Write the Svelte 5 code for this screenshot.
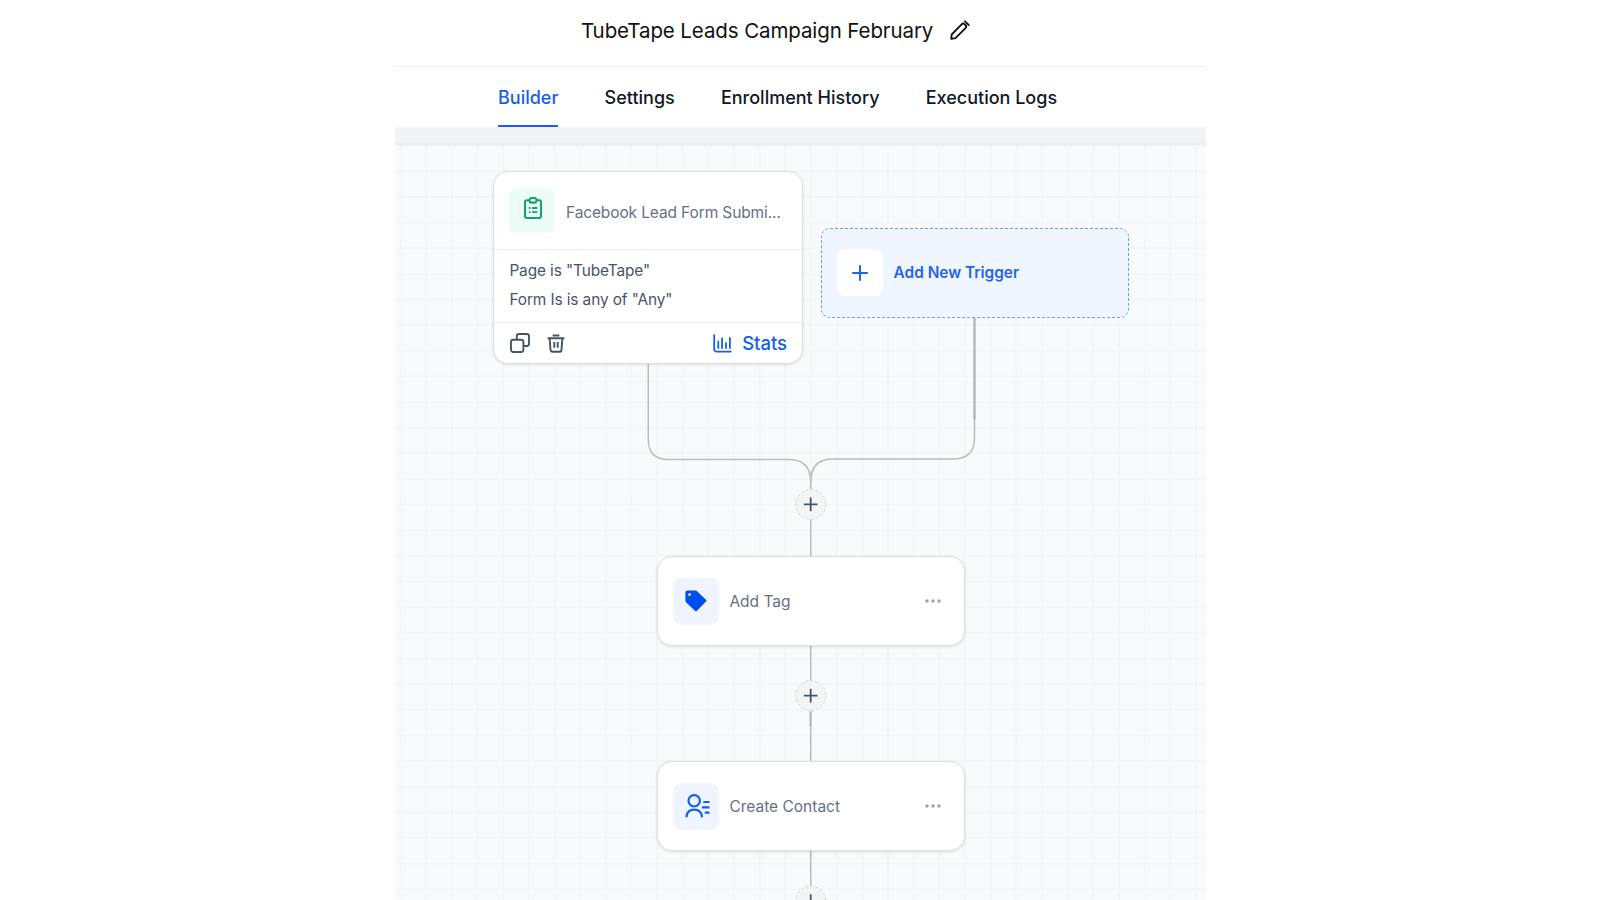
<script>
  const tabs = ['Builder', 'Settings', 'Enrollment History', 'Execution Logs'];
  const steps = [
    { label: 'Add Tag', top: 411, kind: 'tag' },
    { label: 'Create Contact', top: 616, kind: 'contact' }
  ];
  const adders = [359.4, 550.6, 756];
</script>

<main class="panel">
  <header>
    <h1>TubeTape Leads Campaign February</h1>
    <svg class="pencil" width="20" height="20" viewBox="0 0 20 20" fill="none" stroke="#111" stroke-width="1.800" stroke-linejoin="round" stroke-linecap="round">
      <path d="M1.200 18.800l.5-4.300L11.600 4.300a2.200 2.200 0 0 1 3.100 0l.8.8a2.200 2.200 0 0 1 0 3.100L5.500 18.100z" />
      <path d="M15 1.300l3.700 3.700" />
    </svg>
  </header>
  <nav>
    {#each tabs as tab, i}
      <span class="tab" class:active={i === 0}>{tab}</span>
    {/each}
  </nav>
  <div class="band"></div>
  <section class="canvas">
    <svg class="wires" width="811" height="755" fill="none">
      <g stroke="#b9bbbf" stroke-width="1.5">
        <path d="M253.300 218V294.500q0 20 20 20H393.500Q415.700 314.500 415.700 337V412" />
        <path d="M579.500 172V293.500q0 20.500-22 20.500H437.500Q415.700 314 415.700 337" />
        <path d="M415.700 500V616M415.700 706V755" />
      </g>
      <path d="M579.500 173V274.500" stroke="#b5b7bb" stroke-width="2.300" />
      <path d="M415.500 567V581" stroke="#b5b7bb" stroke-width="2" />
      {#each adders as y}
        <g transform="translate(415.700 {y})">
          <circle r="15" fill="#f3f4f6" stroke="#d3d6db" stroke-dasharray="3 2" />
          <path d="M0-6.800V6.800M-6.800 0H6.800" stroke="#475467" stroke-width="1.800" />
        </g>
      {/each}
    </svg>

    <article class="card trigger">
      <div class="head">
        <div class="tile green">
          <svg width="18" height="22" viewBox="0 0 18 22" fill="none" stroke="#12a26d" stroke-width="2.100" stroke-linejoin="round">
            <path d="M5.500 3.200H3A2 2 0 0 0 1 5.200V19a2 2 0 0 0 2 2H15a2 2 0 0 0 2-2V5.200a2 2 0 0 0-2-2H12.500" />
            <rect x="5.500" y="1" width="7" height="4.600" rx="2.200" />
            <path stroke-width="1.800" d="M4.800 11H6.500M8 11H13.300M4.800 15.200H6.500M8 15.200H13.300" />
          </svg>
        </div>
        <span class="label">Facebook Lead Form Submi...</span>
      </div>
      <div class="rules">
        <span>Page is "TubeTape"</span>
        <span>Form Is is any of "Any"</span>
      </div>
      <footer>
        <svg width="20" height="20" viewBox="0 0 20 20" fill="none" stroke="#475467" stroke-width="1.900" stroke-linejoin="round">
          <rect x="1" y="6.800" width="12.400" height="12.200" rx="2.200" />
          <path d="M6.800 6.800V3.200A2.200 2.200 0 0 1 9 1H16.800A2.200 2.200 0 0 1 19 3.200V10.800A2.200 2.200 0 0 1 16.800 13H13.400" />
        </svg>
        <svg class="bin" width="18" height="19" viewBox="0 0 18 19" fill="none" stroke="#475467" stroke-width="1.900">
          <path d="M.6 4.200H17.400M5.600 1.500H12.400M2.600 4.200l.9 11.600a2.200 2.200 0 0 0 2.200 2h6.600a2.200 2.200 0 0 0 2.200-2l.9-11.600M7.300 8V13.800M10.700 8V13.800" />
        </svg>
        <svg class="chart" width="19" height="19" viewBox="0 0 19 19" fill="none" stroke="#155eef" stroke-width="1.800" stroke-linecap="round">
          <path d="M1.200 1.200V15.400a2.200 2.200 0 0 0 2.200 2.200H17.700M5.300 7.500V14M9.100 4.500V14M13 9V14M16.900 4V14" />
        </svg>
        <strong>Stats</strong>
      </footer>
    </article>

    <article class="new">
      <div class="tile white">
        <svg width="18" height="18" viewBox="0 0 18 18" stroke="#2563eb" stroke-width="2"><path d="M9 1.200V16.800M1.200 9H16.800" /></svg>
      </div>
      <strong>Add New Trigger</strong>
    </article>

    {#each steps as step}
      <article class="card step" style:top="{step.top}px">
        <div class="tile blue">
          {#if step.kind === 'tag'}
            <svg width="22" height="22" viewBox="0 0 22 22">
              <path fill="#004eeb" fill-rule="evenodd" d="M2.300.5H10.300a2 2 0 0 1 1.500.6L21 9.700a1.300 1.300 0 0 1 0 1.900L12 20.700a1.500 1.500 0 0 1-2.100 0L1 12.200A2 2 0 0 1 .4 10.700V2.500A2 2 0 0 1 2.300.5zM4.600 3.200a1.400 1.400 0 1 0 0 2.800 1.400 1.400 0 0 0 0-2.800z" />
            </svg>
          {:else}
            <svg class="person" width="25" height="24" viewBox="0 0 25 24" fill="none" stroke="#155eef" stroke-width="2.200">
              <circle cx="9.200" cy="6.800" r="5.700" />
              <path stroke-linecap="round" d="M1.500 22.500C2 18.200 5 15.600 9.200 15.600S16.400 18.200 17 22.500" />
              <path d="M18.300 8H24.500M16.800 13.300H24.500M19.800 18.700H24.500" />
            </svg>
          {/if}
        </div>
        <span class="label">{step.label}</span>
        <svg class="dots" width="16" height="4" viewBox="0 0 16 4" fill="#98a2b3">
          <circle cx="2" cy="2" r="1.700" /><circle cx="8" cy="2" r="1.700" /><circle cx="14" cy="2" r="1.700" />
        </svg>
      </article>
    {/each}
  </section>
</main>

<style>
  :global(body) { margin: 0; background: #fff; overflow: hidden; }
  .panel { width: 811px; height: 900px; margin-left: 395px; display: flex; flex-direction: column; font-family: Inter, sans-serif; overflow: hidden; }
  header { height: 67px; box-sizing: border-box; flex: none; border-bottom: 1px solid #eceef1; display: flex; align-items: center; padding: 0 0 5px 186px; gap: 16.500px; }
  h1 { margin: 0; font-size: 20.500px; letter-spacing: -0.100px; font-weight: 400; color: #111; line-height: 26px; white-space: nowrap; }
  .pencil { margin-bottom: 1px; }
  nav { height: 60px; flex: none; display: flex; gap: 46.200px; padding-left: 103px; }
  .tab { box-sizing: border-box; height: 60px; line-height: 62px; font-size: 18px; font-weight: 500; color: #101828; white-space: nowrap; }
  .active { color: #155eef; border-bottom: 2px solid #155eef; }
  .band { height: 18px; flex: none; box-sizing: border-box; background: #f2f3f5; border-bottom: 2px solid #e9ebed; }
  .canvas {
    position: relative; flex: 1; background-color: #f9fafc;
    background-image: linear-gradient(90deg, #f3f5f7 1.500px, transparent 1.500px), linear-gradient(#f3f5f7 1.500px, transparent 1.500px);
    background-size: 25.670px 25.650px; background-position: 4.600px -0.300px;
  }
  .wires { position: absolute; left: 0; top: 0; }
  .card { position: absolute; box-sizing: border-box; background: #fff; border: 1px solid #dcdfe5; border-radius: 15px; box-shadow: 0 1px 3px rgba(16, 24, 40, 0.12); }
  .trigger { left: 98.400px; top: 26px; width: 310px; height: 193px; display: flex; flex-direction: column; }
  .head { height: 78px; box-sizing: border-box; display: flex; padding: 16px 0 0 15px; border-bottom: 1px solid #eaecf0; }
  .tile { width: 46px; height: 47px; border-radius: 8px; display: flex; align-items: center; justify-content: center; flex: none; }
  .green { height: 45px; background: #ecfdf5; }
  .green svg { margin: 0 0 5px 1px; }
  .blue { background: #eff4ff; }
  .white { background: #fff; }
  .label { font-size: 15.500px; color: #667085; margin-left: 10.600px; white-space: nowrap; }
  .head .label { line-height: 50px; letter-spacing: -0.120px; }
  .rules { height: 73px; box-sizing: border-box; border-bottom: 1px solid #eaecf0; padding: 6px 15px; display: flex; flex-direction: column; font-size: 15.400px; letter-spacing: -0.100px; line-height: 29px; color: #475467; }
  footer { flex: 1; display: flex; align-items: center; padding: 0 15.300px; color: #155eef; font-size: 18.500px; }
  footer strong { font-weight: 500; margin-left: 10px; }
  .bin { margin-left: 17px; }
  .chart { margin-left: auto; }
  .new { position: absolute; box-sizing: border-box; left: 425.600px; top: 83px; width: 308.500px; height: 90px; display: flex; align-items: center; padding: 0 0 1px 15px; background: #eff6ff; border: 1px dashed #6d9bf5; border-radius: 9px; color: #2563eb; font-size: 15.400px; }
  .new strong { font-weight: 600; margin-left: 11px; }
  .step { left: 261.500px; width: 308.500px; height: 90px; display: flex; align-items: center; padding: 0 23px 0 15.300px; }
  .person { margin-left: 3px; }
  .dots { margin-left: auto; }
</style>
